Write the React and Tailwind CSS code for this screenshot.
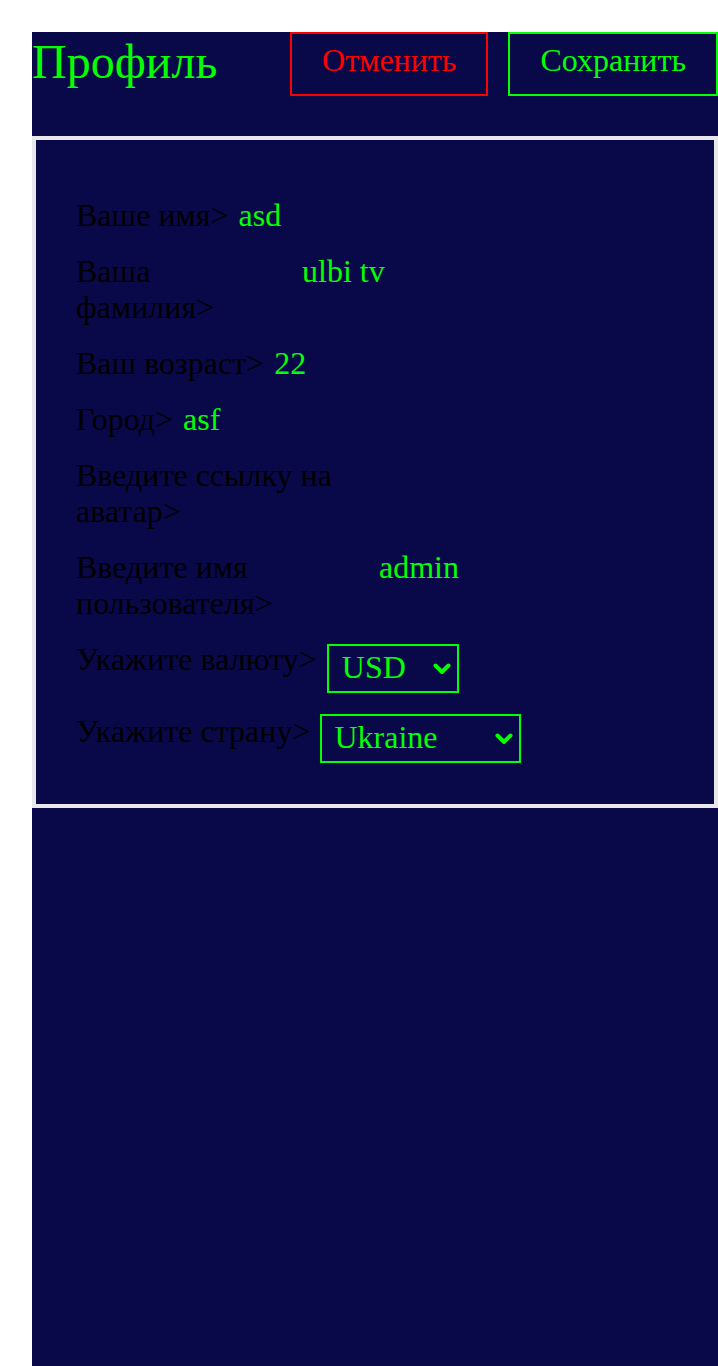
import React from "react";

const font = { fontFamily: '"Liberation Serif", "Times New Roman", serif' };

function Row({ label, value, labelW }) {
  return (
    <div className="flex items-start gap-[10px]">
      <div className={`text-black text-[32px] leading-[36px] ${labelW || ""}`}>{label}</div>
      <input
        readOnly
        value={value}
        className="flex-1 min-w-0 bg-transparent border-0 outline-none text-[#04ff04] text-[32px] leading-[36px] h-[36px] p-0"
        style={font}
      />
    </div>
  );
}

function SelectRow({ label, value, options, w, mt, pl }) {
  return (
    <div className="flex items-start gap-[10px]">
      <div className="text-black text-[32px] leading-[36px]">{label}</div>
      <div className={`relative ${w} ${mt}`}>
        <select
          value={value}
          onChange={() => {}}
          className={`appearance-none w-full h-[49px] bg-transparent border-2 border-[#04ff04] text-[#04ff04] text-[32px] leading-[36px] ${pl} pr-[30px] pb-[4px] outline-none rounded-none`}
          style={font}
        >
          {options.map((o) => (
            <option key={o} value={o} className="bg-[#090949]">
              {o}
            </option>
          ))}
        </select>
        <svg
          className="absolute right-[8px] top-[19px] pointer-events-none"
          width="18"
          height="12"
          viewBox="0 0 18 12"
          fill="none"
        >
          <path d="M2.5 2.5 L9 9 L15.5 2.5" stroke="#04ff04" strokeWidth="4" strokeLinecap="round" strokeLinejoin="round" />
        </svg>
      </div>
    </div>
  );
}

export default function App() {
  return (
    <div className="min-h-[1366px] bg-white pl-[32px] pt-[32px]" style={font}>
      <div className="bg-[#090949] min-h-[1334px]">
        <div className="flex items-start h-[104px]">
          <div className="text-[#04ff04] text-[48px] leading-[60px]">Профиль</div>
          <div className="ml-auto flex gap-[20px]">
            <button
              className="h-[64px] px-[30px] pt-[8px] flex items-start border-2 border-[#ff0000] text-[#ff0000] text-[32px] leading-[36px] bg-transparent"
              style={font}
            >
              Отменить
            </button>
            <button
              className="h-[64px] px-[30px] pt-[8px] flex items-start border-2 border-[#04ff04] text-[#04ff04] text-[32px] leading-[36px] bg-transparent"
              style={font}
            >
              Сохранить
            </button>
          </div>
        </div>
        <div className="border-4 border-[#e8e8ea] pt-[57px] pb-[41px] px-[40px] flex flex-col gap-[20px]">
          <Row label="Ваше имя>" value="asd" />
          <Row label="Ваша фамилия>" value="ulbi tv" labelW="w-[216px] shrink-0" />
          <Row label="Ваш возраст>" value="22" />
          <Row label="Город>" value="asf" />
          <Row label="Введите ссылку на аватар>" value="" labelW="w-[293px] shrink-0" />
          <Row label="Введите имя пользователя>" value="admin" labelW="w-[293px] shrink-0" />
          <SelectRow label="Укажите валюту>" value="USD" options={["RUB", "EUR", "USD"]} w="w-[132px]" mt="mt-[3px]" pl="pl-[13px]" />
          <SelectRow
            label="Укажите страну>"
            value="Ukraine"
            options={["Armenia", "Russia", "Belarus", "Kazakhstan", "Ukraine"]}
            w="w-[201px]"
            mt="mt-[1px]"
            pl="pl-[12px]"
          />
        </div>
      </div>
    </div>
  );
}
